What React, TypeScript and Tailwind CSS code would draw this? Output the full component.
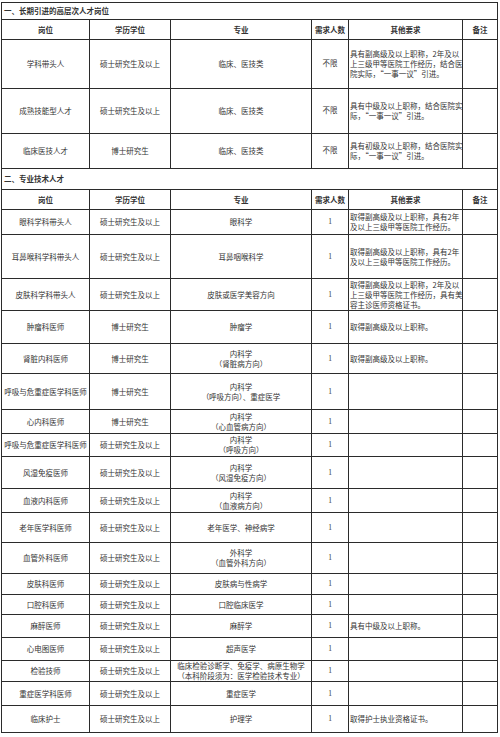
type Row = {
  post: string;
  degree: string;
  major: string[];
  count: string;
  other: string[];
  h: string;
};

const partOne: Row[] = [
  {
    post: "学科带头人",
    degree: "硕士研究生及以上",
    major: ["临床、医技类"],
    count: "不限",
    other: ["具有副高级及以上职称，2年及以", "上三级甲等医院工作经历，结合医", "院实际，“一事一议”引进。"],
    h: "h-[49px]",
  },
  {
    post: "成熟技能型人才",
    degree: "硕士研究生及以上",
    major: ["临床、医技类"],
    count: "不限",
    other: ["具有中级及以上职称，结合医院实", "际，“一事一议”引进。"],
    h: "h-[45px]",
  },
  {
    post: "临床医技人才",
    degree: "博士研究生",
    major: ["临床、医技类"],
    count: "不限",
    other: ["具有初级及以上职称，结合医院实", "际，“一事一议”引进。"],
    h: "h-[35px]",
  },
];

const fuGao2 = ["取得副高级及以上职称，具有2年", "及以上三级甲等医院工作经历。"];

const partTwo: Row[] = [
  { post: "眼科学科带头人", degree: "硕士研究生及以上", major: ["眼科学"], count: "1", other: fuGao2, h: "h-[25px]" },
  { post: "耳鼻喉科学科带头人", degree: "硕士研究生及以上", major: ["耳鼻咽喉科学"], count: "1", other: fuGao2, h: "h-[44px]" },
  {
    post: "皮肤科学科带头人",
    degree: "硕士研究生及以上",
    major: ["皮肤或医学美容方向"],
    count: "1",
    other: ["取得副高级及以上职称，2年及以", "上三级甲等医院工作经历，具有美", "容主诊医师资格证书。"],
    h: "h-[32px]",
  },
  { post: "肿瘤科医师", degree: "博士研究生", major: ["肿瘤学"], count: "1", other: ["取得副高级及以上职称。"], h: "h-[33px]" },
  { post: "肾脏内科医师", degree: "博士研究生", major: ["内科学", "（肾脏病方向）"], count: "1", other: ["取得副高级及以上职称。"], h: "h-[30px]" },
  { post: "呼吸与危重症医学科医师", degree: "博士研究生", major: ["内科学", "（呼吸方向）、重症医学"], count: "1", other: [], h: "h-[36px]" },
  { post: "心内科医师", degree: "博士研究生", major: ["内科学", "（心血管病方向）"], count: "1", other: [], h: "h-[24px]" },
  { post: "呼吸与危重症医学科医师", degree: "硕士研究生及以上", major: ["内科学", "（呼吸方向）"], count: "1", other: [], h: "h-[23px]" },
  { post: "风湿免疫医师", degree: "硕士研究生及以上", major: ["内科学", "（风湿免疫方向）"], count: "1", other: [], h: "h-[32px]" },
  { post: "血液内科医师", degree: "硕士研究生及以上", major: ["内科学", "（血液病方向）"], count: "1", other: [], h: "h-[24px]" },
  { post: "老年医学科医师", degree: "硕士研究生及以上", major: ["老年医学、神经病学"], count: "1", other: [], h: "h-[30px]" },
  { post: "血管外科医师", degree: "硕士研究生及以上", major: ["外科学", "（血管外科方向）"], count: "1", other: [], h: "h-[31px]" },
  { post: "皮肤科医师", degree: "硕士研究生及以上", major: ["皮肤病与性病学"], count: "1", other: [], h: "h-[21px]" },
  { post: "口腔科医师", degree: "硕士研究生及以上", major: ["口腔临床医学"], count: "1", other: [], h: "h-[20px]" },
  { post: "麻醉医师", degree: "硕士研究生及以上", major: ["麻醉学"], count: "1", other: ["具有中级及以上职称。"], h: "h-[23px]" },
  { post: "心电图医师", degree: "硕士研究生及以上", major: ["超声医学"], count: "1", other: [], h: "h-[23px]" },
  {
    post: "检验技师",
    degree: "硕士研究生及以上",
    major: ["临床检验诊断学、免疫学、病原生物学", "（本科阶段须为：医学检验技术专业）"],
    count: "1",
    other: [],
    h: "h-[21px]",
  },
  { post: "重症医学科医师", degree: "硕士研究生及以上", major: ["重症医学"], count: "1", other: [], h: "h-[24px]" },
  { post: "临床护士", degree: "硕士研究生及以上", major: ["护理学"], count: "1", other: ["取得护士执业资格证书。"], h: "h-[27px]" },
];

const cell = "border border-[#2b2b2b] p-0 align-middle";

function Lines({ lines }: { lines: string[] }) {
  return (
    <>
      {lines.map((l, i) => (
        <div key={i} className="whitespace-nowrap">
          {l}
        </div>
      ))}
    </>
  );
}

function SectionTitle({ text, h }: { text: string; h: string }) {
  return (
    <tr className={h}>
      <td colSpan={6} className={`${cell} pl-[2px] text-left font-bold`}>
        {text}
      </td>
    </tr>
  );
}

function HeaderRow() {
  return (
    <tr className="h-[20px] font-bold">
      <td className={`${cell} text-center`}>岗位</td>
      <td className={`${cell} text-center`}>学历学位</td>
      <td className={`${cell} text-center`}>专业</td>
      <td className={`${cell} text-center`}>需求人数</td>
      <td className={`${cell} text-center`}>其他要求</td>
      <td className={`${cell} text-center`}>备注</td>
    </tr>
  );
}

function DataRow({ row }: { row: Row }) {
  return (
    <tr className={row.h}>
      <td className={`${cell} text-center whitespace-nowrap`}>{row.post}</td>
      <td className={`${cell} text-center`}>{row.degree}</td>
      <td className={`${cell} text-center leading-[10px]`}>
        <Lines lines={row.major} />
      </td>
      <td className={`${cell} text-center font-['Liberation_Serif','Noto_Sans_CJK_SC',serif]`}>{row.count}</td>
      <td className={`${cell} pl-[1px] text-left leading-[10px]`}>
        <Lines lines={row.other} />
      </td>
      <td className={cell}></td>
    </tr>
  );
}

export default function App() {
  return (
    <div className="min-h-screen w-[500px] bg-white pt-[2px] pl-[1px]">
      <table className="w-[496px] table-fixed border-collapse border-[1.5px] border-[#2b2b2b] font-['Noto_Sans_CJK_SC',sans-serif] text-[7.5px] leading-[10px] text-[#333]">
        <colgroup>
          <col className="w-[88px]" />
          <col className="w-[81px]" />
          <col className="w-[141px]" />
          <col className="w-[37px]" />
          <col className="w-[114px]" />
          <col className="w-[35px]" />
        </colgroup>
        <tbody>
          <SectionTitle text="一、长期引进的高层次人才岗位" h="h-[17px]" />
          <HeaderRow />
          {partOne.map((r, i) => (
            <DataRow key={i} row={r} />
          ))}
          <SectionTitle text="二、专业技术人才" h="h-[21px]" />
          <HeaderRow />
          {partTwo.map((r, i) => (
            <DataRow key={i} row={r} />
          ))}
        </tbody>
      </table>
    </div>
  );
}
